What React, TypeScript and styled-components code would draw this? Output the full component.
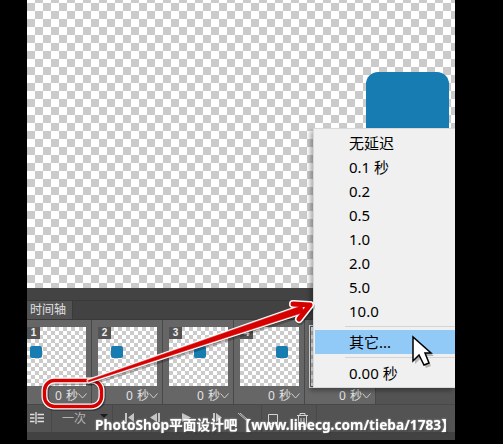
import styled, { createGlobalStyle } from "styled-components";

const GlobalStyle = createGlobalStyle`
  html, body {
    margin: 0;
    padding: 0;
    background: #000;
    overflow: hidden;
  }
`;

const Page = styled.div`
  position: relative;
  width: 503px;
  height: 444px;
  background: #000;
  overflow: hidden;
  font-family: "Noto Sans", "Noto Sans CJK SC", sans-serif;
`;

const Workspace = styled.div`
  width: 428px;
  height: 440px;
  margin-left: 27px;
  display: flex;
  flex-direction: column;
  position: relative;
  overflow: hidden;
`;

const checker = (size: number) => `
  background-color: #fff;
  background-image: conic-gradient(#cbcbcb 25%, #fff 0 50%, #cbcbcb 0 75%, #fff 0);
  background-size: ${size * 2}px ${size * 2}px;
`;

const Canvas = styled.div`
  position: relative;
  height: 288px;
  flex: none;
  ${checker(8)}
  background-position: 8px 3px;
`;

const Shape = styled.div`
  position: absolute;
  left: 339px;
  top: 72px;
  width: 83px;
  height: 100px;
  background: #167cb2;
  border-radius: 12px 12px 0 0;
`;

const Panel = styled.div`
  flex: 1;
  display: flex;
  flex-direction: column;
  background: #535353;
`;

const GapBand = styled.div`
  height: 12px;
  background: #434343;
  border-bottom: 1px solid #3a3a3a;
`;

const TabBar = styled.div`
  height: 18px;
  background: #424242;
  display: flex;
  border-bottom: 1px solid #3a3a3a;
`;

const Tab = styled.div`
  width: 42px;
  padding-left: 3px;
  background: #535353;
  color: #e0e0e0;
  font-size: 12px;
  line-height: 18px;
  border-right: 1px solid #3a3a3a;
`;

const FrameRow = styled.div`
  height: 84px;
  display: flex;
  background: #535353;
  border-bottom: 1px solid #484848;
`;

const FrameCell = styled.div<{ $width: number }>`
  position: relative;
  width: ${(p) => p.$width}px;
  flex: none;
  box-sizing: border-box;
  background: #666;
  border-right: 1px solid #484848;
  padding-top: 7px;
  display: flex;
  flex-direction: column;
  align-items: flex-end;
`;

const Thumb = styled.div<{ $selected?: boolean }>`
  position: relative;
  width: 59px;
  height: 59px;
  margin-right: 5px;
  ${checker(4)}
  outline: ${(p) => (p.$selected ? "1px solid #e8e8e8" : "none")};
  outline-offset: 1px;
`;

const BlueDot = styled.div<{ $left: number }>`
  position: absolute;
  left: ${(p) => p.$left}px;
  top: 19px;
  width: 12px;
  height: 12px;
  background: #167cb2;
  border-radius: 2px;
`;

const Badge = styled.div`
  position: absolute;
  left: 0;
  top: 0;
  width: 13px;
  height: 12px;
  background: #535353;
  color: #eee;
  font-size: 10px;
  font-weight: 700;
  line-height: 12px;
  text-align: center;
  font-family: "Liberation Sans", sans-serif;
`;

const Delay = styled.div`
  display: flex;
  align-items: center;
  gap: 0;
  margin-right: 4px;
  margin-top: 2px;
  color: #e2e2e2;
  font-size: 12px;
  line-height: 16px;
  white-space: nowrap;
  word-spacing: 1px;
`;

const Toolbar = styled.div`
  height: 27px;
  display: flex;
  align-items: center;
  background: #535353;
`;

const ToolCell = styled.div<{ $width: number; $pad: number }>`
  width: ${(p) => p.$width}px;
  height: 100%;
  flex: none;
  box-sizing: border-box;
  border-right: 1px solid #484848;
  display: flex;
  align-items: flex-start;
  padding: 7px 0 0 ${(p) => p.$pad}px;
  gap: 14px;
`;

const LoopLabel = styled.span`
  font-size: 12px;
  line-height: 14px;
  color: #b4b4b4;
`;

const BottomBand = styled.div`
  flex: 1;
  background: #424242;
`;

const Menu = styled.div`
  position: absolute;
  left: 286px;
  top: 128px;
  width: 142px;
  height: 260px;
  box-sizing: border-box;
  background: #f0f0f0;
  border: 1px solid #d8d8d8;
  border-right: none;
  padding-top: 2px;
  box-shadow: -3px 3px 4px rgba(0, 0, 0, 0.3);
`;

const MenuItem = styled.div<{ $active?: boolean }>`
  height: 24px;
  margin-left: 1px;
  padding-left: 34px;
  font-size: 15px;
  line-height: 24px;
  color: #000;
  background: ${(p) => (p.$active ? "#91c9f7" : "transparent")};
`;

const MenuSeparator = styled.div`
  height: 1px;
  margin: 3px 0 3px 31px;
  background: #d4d4d4;
`;

const Overlay = styled.svg`
  position: absolute;
  left: 0;
  top: 0;
  pointer-events: none;
`;

const Watermark = styled.div`
  position: absolute;
  left: 95px;
  top: 415px;
  color: #fff;
  font-size: 13.7px;
  font-weight: 700;
  line-height: 20px;
  white-space: nowrap;
  filter: blur(0.4px);
  text-shadow: 0 0 2px rgba(255, 255, 255, 0.7), 1px 1px 2px rgba(0, 0, 0, 0.5);
`;

interface FrameInfo {
  id: number;
  width: number;
  dot: number;
}

const frames: FrameInfo[] = [
  { id: 1, width: 65, dot: 3 },
  { id: 2, width: 71, dot: 13 },
  { id: 3, width: 71, dot: 25 },
  { id: 4, width: 71, dot: 36 },
];

const menuItems = ["无延迟", "0.1 秒", "0.2", "0.5", "1.0", "2.0", "5.0", "10.0"];

const shaft = "M88 380.4 L301.9 305.7 L304.1 312.3 L88.5 382 Z";
const head = "M293 304 L310 305 L299 319";

const Chevron = () => (
  <svg width="9" height="6" viewBox="0 0 9 6" fill="none" stroke="#cfcfcf">
    <path d="M0.5 0.5 L4.5 5 L8.5 0.5" />
  </svg>
);

const App = () => {
  return (
    <Page>
      <GlobalStyle />
      <Workspace>
        <Canvas>
          <Shape />
        </Canvas>
        <Panel>
          <GapBand />
          <TabBar>
            <Tab>时间轴</Tab>
          </TabBar>
          <FrameRow>
            {frames.map((f) => (
              <FrameCell key={f.id} $width={f.width}>
                <Thumb>
                  <BlueDot $left={f.dot} />
                  <Badge>{f.id}</Badge>
                </Thumb>
                <Delay>
                  0 秒
                  <Chevron />
                </Delay>
              </FrameCell>
            ))}
            <FrameCell $width={71}>
              <Thumb $selected />
              <Delay>
                0 秒
                <Chevron />
              </Delay>
            </FrameCell>
          </FrameRow>
          <Toolbar>
            <ToolCell $width={25} $pad={3}>
              <svg width="14" height="12" viewBox="0 0 14 12" fill="none" stroke="#e0e0e0" strokeWidth="1.3">
                <path d="M6 0 V12 M0 2.5 H4.5 M0 6 H4.5 M0 9.5 H4.5 M7.5 2.5 H14 M7.5 6 H14 M7.5 9.5 H14" />
              </svg>
            </ToolCell>
            <ToolCell $width={61} $pad={10}>
              <LoopLabel>一次</LoopLabel>
              <svg width="8" height="4" viewBox="0 0 8 4" fill="#1c1c1c" style={{ marginTop: 2 }}>
                <path d="M0 0 H8 L4 4 Z" />
              </svg>
            </ToolCell>
            <ToolCell $width={149} $pad={12}>
              <svg width="128" height="12" viewBox="0 0 128 12" fill="#c4c4c4">
                <path d="M0 1 V10 H2 V1 Z M9 1 L3 5.5 L9 10 Z" />
                <path d="M25 5.5 L32 1 V10 Z M33 1 H35 V10 H33 Z" />
                <path d="M57 1 L66 5.5 L57 10 Z" />
                <path d="M88 1 V10 H90 V1 Z M91 1 L97 5.5 L91 10 Z" />
                <path d="M113 1 L121 8 M115 1 L123 8" stroke="#c4c4c4" fill="none" />
              </svg>
            </ToolCell>
            <ToolCell $width={55} $pad={6}>
              <svg width="40" height="15" viewBox="0 0 40 15" fill="none" stroke="#d4d4d4">
                <path d="M0.5 2.5 H9.5 V11.5 H0.5 Z" />
                <path d="M29 3.5 H40 M32 3.5 V1.5 H37 V3.5 M30.5 3.5 V14.5 H38.5 V3.5 M33 6 V12 M36 6 V12" />
              </svg>
            </ToolCell>
          </Toolbar>
          <BottomBand />
        </Panel>
        <Menu>
          {menuItems.map((m) => (
            <MenuItem key={m}>{m}</MenuItem>
          ))}
          <MenuSeparator />
          <MenuItem $active>其它...</MenuItem>
          <MenuSeparator />
          <MenuItem>0.00 秒</MenuItem>
        </Menu>
      </Workspace>
      <Overlay width="503" height="444" viewBox="0 0 503 444" fill="none">
        <rect x="44.5" y="380.5" width="57" height="26" rx="10" stroke="#000" strokeOpacity="0.3" strokeWidth="7" transform="translate(1 1)" />
        <rect x="44.5" y="380.5" width="57" height="26" rx="10" stroke="#fff" strokeWidth="6" />
        <rect x="44.5" y="380.5" width="57" height="26" rx="10" stroke="#d60000" strokeWidth="3.5" />
        <g strokeLinecap="round" strokeLinejoin="round">
          <g transform="translate(1 2)" stroke="#000" strokeOpacity="0.25" strokeWidth="4">
            <path d={shaft} fill="#000" fillOpacity="0.25" />
            <path d={head} strokeWidth="8" />
          </g>
          <path d={shaft} fill="#fff" stroke="#fff" strokeWidth="3" />
          <path d={head} stroke="#fff" strokeWidth="8" />
          <path d={shaft} fill="#d60000" stroke="#d60000" strokeWidth="0.5" />
          <path d={head} stroke="#d60000" strokeWidth="5" />
        </g>
        <path d="M413 338 V362 L419 356 L424 366 L429 364 L425 354 L432 354 Z" fill="#000" opacity="0.25" transform="translate(2 2)" />
        <path d="M413 337 V361 L419 355 L424 365 L429 363 L425 353 L431 353 Z" fill="#fff" stroke="#000" strokeWidth="1.5" />
      </Overlay>
      <Watermark>PhotoShop平面设计吧【www.linecg.com/tieba/1783】</Watermark>
    </Page>
  );
};

export default App;
